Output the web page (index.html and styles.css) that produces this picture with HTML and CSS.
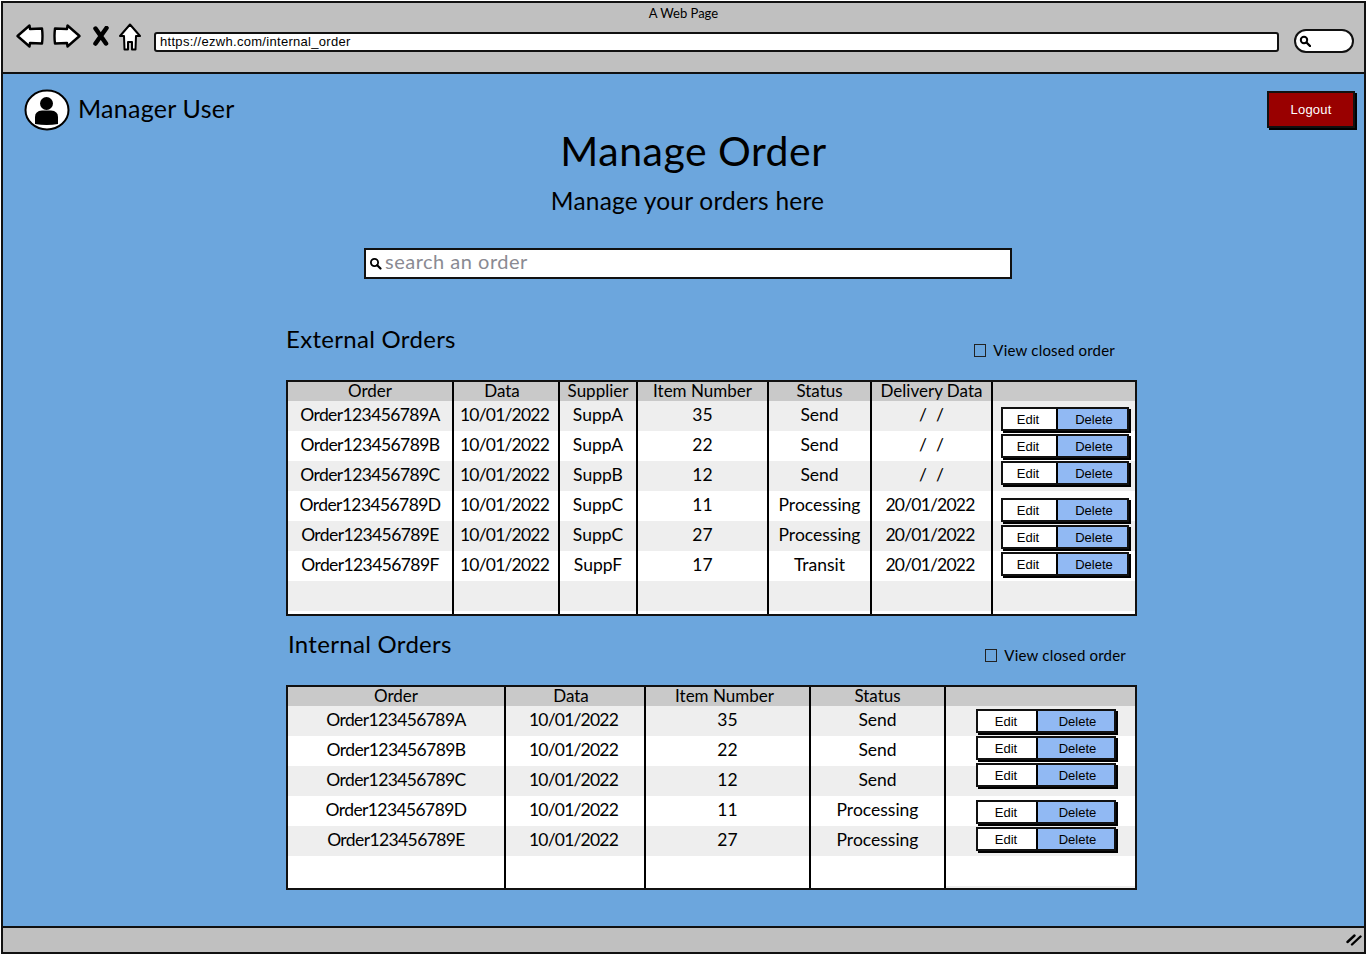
FILE: index.html
```html
<!DOCTYPE html>
<html>
  <head>
    <meta charset="utf-8">
    <title>A Web Page</title>
    <link rel="stylesheet" href="styles.css">
  </head>
  <body>
    <div class="window">
      <div class="toolbar">
        <div class="toolbar-title">A Web Page</div>
        <div class="toolbar-row">
          <svg class="icon-back" width="28" height="24" viewBox="0 0 28 24"><path d="M1.5 12 L13.5 1.5 L14 5 L26 4.5 Q27 12 26 19.5 L14 19 L13.5 22.5 Z" fill="#fff" stroke="#000" stroke-width="2.4" stroke-linejoin="round"/></svg>
          <svg class="icon-forward" width="28" height="24" viewBox="0 0 28 24"><path d="M26.5 12 L14.5 1.5 L14 5 L2 4.5 Q1 12 2 19.5 L14 19 L14.5 22.5 Z" fill="#fff" stroke="#000" stroke-width="2.4" stroke-linejoin="round"/></svg>
          <svg class="icon-stop" width="16" height="20" viewBox="0 0 16 20"><path d="M2.5 2.5 L13 17.5 M13.5 2 L2.5 17.5" fill="none" stroke="#000" stroke-width="4.5" stroke-linecap="round"/></svg>
          <svg class="icon-home" width="22" height="28" viewBox="0 0 22 28"><path d="M11 1.5 L21 13 L17 13 L16.5 26.5 L13 26.5 L13 19 L9 19 L9 26.5 L5.5 26.5 L5 13 L1 13 Z" fill="#fff" stroke="#000" stroke-width="2" stroke-linejoin="round"/></svg>
          <div class="url-bar">https://ezwh.com/internal_order</div>
          <div class="browser-search">
            <svg width="12" height="12" viewBox="0 0 12 12"><circle cx="5" cy="5" r="3.2" fill="none" stroke="#000" stroke-width="2"/><path d="M7.5 7.5 L11 11" stroke="#000" stroke-width="2.4" stroke-linecap="round"/></svg>
          </div>
        </div>
      </div>

      <div class="main">
        <div class="user-row">
          <div class="user">
            <svg class="avatar" width="46" height="42" viewBox="0 0 46 42">
              <ellipse cx="23" cy="21" rx="21.5" ry="19.5" fill="#fff" stroke="#000" stroke-width="2"/>
              <circle cx="22.5" cy="14.5" r="6.5" fill="#000"/>
              <path d="M11 35 L11 28 Q11 22 18 21.5 L27 21.5 Q34 22 34 28 L34 35 Q23 37 11 35 Z" fill="#000"/>
            </svg>
            <span class="user-name">Manager User</span>
          </div>
          <div class="logout">Logout</div>
        </div>

        <h1 class="page-title">Manage Order</h1>
        <h2 class="page-subtitle">Manage your orders here</h2>

        <div class="search">
          <svg width="13" height="13" viewBox="0 0 13 13"><circle cx="5.5" cy="5.5" r="3.6" fill="none" stroke="#000" stroke-width="1.8"/><path d="M8.2 8.2 L11.5 11.5" stroke="#000" stroke-width="2.2" stroke-linecap="round"/></svg>
          <span class="search-text">search an order</span>
        </div>

        <section class="orders orders-external">
          <div class="orders-head">
            <h3 class="orders-title">External Orders</h3>
            <div class="closed-toggle"><span class="checkbox"></span>View closed order</div>
          </div>
          <table>
            <colgroup>
              <col style="width:164px"><col style="width:106px"><col style="width:78px"><col style="width:131px"><col style="width:103px"><col style="width:121px"><col style="width:144px">
            </colgroup>
            <thead>
              <tr><th>Order</th><th>Data</th><th>Supplier</th><th>Item Number</th><th>Status</th><th>Delivery Data</th><th></th></tr>
            </thead>
            <tbody>
              <tr>
                <td class="cell-id">Order123456789A</td><td class="cell-date">10/01/2022</td><td>SuppA</td><td>35</td><td>Send</td><td>/ &nbsp;/</td>
                <td class="actions" rowspan="7">
                  <div class="btn-stack">
                    <div class="btn-group"><span class="btn-edit">Edit</span><span class="btn-delete">Delete</span></div>
                    <div class="btn-group"><span class="btn-edit">Edit</span><span class="btn-delete">Delete</span></div>
                    <div class="btn-group"><span class="btn-edit">Edit</span><span class="btn-delete">Delete</span></div>
                    <div class="btn-group"><span class="btn-edit">Edit</span><span class="btn-delete">Delete</span></div>
                    <div class="btn-group"><span class="btn-edit">Edit</span><span class="btn-delete">Delete</span></div>
                    <div class="btn-group"><span class="btn-edit">Edit</span><span class="btn-delete">Delete</span></div>
                  </div>
                </td>
              </tr>
              <tr><td class="cell-id">Order123456789B</td><td class="cell-date">10/01/2022</td><td>SuppA</td><td>22</td><td>Send</td><td>/ &nbsp;/</td></tr>
              <tr><td class="cell-id">Order123456789C</td><td class="cell-date">10/01/2022</td><td>SuppB</td><td>12</td><td>Send</td><td>/ &nbsp;/</td></tr>
              <tr><td class="cell-id">Order123456789D</td><td class="cell-date">10/01/2022</td><td>SuppC</td><td>11</td><td>Processing</td><td class="cell-date">20/01/2022</td></tr>
              <tr><td class="cell-id">Order123456789E</td><td class="cell-date">10/01/2022</td><td>SuppC</td><td>27</td><td>Processing</td><td class="cell-date">20/01/2022</td></tr>
              <tr><td class="cell-id">Order123456789F</td><td class="cell-date">10/01/2022</td><td>SuppF</td><td>17</td><td>Transit</td><td class="cell-date">20/01/2022</td></tr>
              <tr class="row-empty"><td></td><td></td><td></td><td></td><td></td><td></td></tr>
            </tbody>
          </table>
        </section>

        <section class="orders orders-internal">
          <div class="orders-head">
            <h3 class="orders-title">Internal Orders</h3>
            <div class="closed-toggle"><span class="checkbox"></span>View closed order</div>
          </div>
          <table>
            <colgroup>
              <col style="width:216px"><col style="width:140px"><col style="width:165px"><col style="width:135px"><col style="width:191px">
            </colgroup>
            <thead>
              <tr><th>Order</th><th>Data</th><th>Item Number</th><th>Status</th><th></th></tr>
            </thead>
            <tbody>
              <tr>
                <td class="cell-id">Order123456789A</td><td class="cell-date">10/01/2022</td><td>35</td><td>Send</td>
                <td class="actions" rowspan="6">
                  <div class="btn-stack">
                    <div class="btn-group"><span class="btn-edit">Edit</span><span class="btn-delete">Delete</span></div>
                    <div class="btn-group"><span class="btn-edit">Edit</span><span class="btn-delete">Delete</span></div>
                    <div class="btn-group"><span class="btn-edit">Edit</span><span class="btn-delete">Delete</span></div>
                    <div class="btn-group"><span class="btn-edit">Edit</span><span class="btn-delete">Delete</span></div>
                    <div class="btn-group"><span class="btn-edit">Edit</span><span class="btn-delete">Delete</span></div>
                  </div>
                </td>
              </tr>
              <tr><td class="cell-id">Order123456789B</td><td class="cell-date">10/01/2022</td><td>22</td><td>Send</td></tr>
              <tr><td class="cell-id">Order123456789C</td><td class="cell-date">10/01/2022</td><td>12</td><td>Send</td></tr>
              <tr><td class="cell-id">Order123456789D</td><td class="cell-date">10/01/2022</td><td>11</td><td>Processing</td></tr>
              <tr><td class="cell-id">Order123456789E</td><td class="cell-date">10/01/2022</td><td>27</td><td>Processing</td></tr>
              <tr class="row-empty"><td></td><td></td><td></td><td></td></tr>
            </tbody>
          </table>
        </section>
      </div>

      <div class="statusbar">
        <svg width="16" height="12" viewBox="0 0 16 12"><path d="M1.5 8 L8.5 1.5 M6 10.5 L14.5 2.5" stroke="#000" stroke-width="2.4" stroke-linecap="round"/></svg>
      </div>
    </div>
  </body>
</html>
```

FILE: styles.css
```css
* {
  box-sizing: border-box;
}

body {
  margin: 0;
  background-color: #fff;
  font-family: "Lato", "Liberation Sans", sans-serif;
  color: #000;
}

.window {
  display: flex;
  flex-direction: column;
  width: 1365px;
  height: 953px;
  margin: 1px 0 0 1px;
  border: 2px solid #111;
  background-color: #6ca6dd;
}

/* browser chrome */
.toolbar {
  height: 71px;
  padding-top: 3px;
  border-bottom: 2px solid #111;
  background-color: #c0c0c0;
}

.toolbar-title {
  height: 16px;
  font-size: 13px;
  line-height: 15px;
  text-align: center;
}

.toolbar-row {
  display: flex;
  align-items: flex-start;
  margin-top: 2px;
  padding-left: 13px;
}

.icon-forward {
  margin-left: 9px;
}

.icon-stop {
  margin: 2px 0 0 12px;
}

.icon-home {
  margin: -1px 0 0 10px;
}

.url-bar {
  width: 1125px;
  height: 20px;
  margin: 8px 0 0 13px;
  padding-left: 4px;
  border: 2px solid #111;
  border-radius: 3px;
  background-color: #fff;
  font-family: "Liberation Sans", sans-serif;
  font-size: 13px;
  line-height: 16px;
  letter-spacing: 0.3px;
}

.browser-search {
  display: flex;
  align-items: center;
  width: 60px;
  height: 24px;
  margin: 5px 0 0 15px;
  padding-left: 3px;
  border: 2px solid #111;
  border-radius: 12px;
  background-color: #fff;
}

/* page */
.main {
  flex: 1;
}

.user-row {
  display: flex;
  justify-content: space-between;
  padding: 16px 9px 0 21px;
}

.user {
  display: flex;
  align-items: center;
  height: 38px;
}

.avatar {
  margin: 2px 8px 0 0;
}

.user-name {
  margin-bottom: 2px;
  font-size: 25px;
  letter-spacing: 0.25px;
}

.logout {
  width: 88px;
  height: 37px;
  margin-top: 1px;
  border: 2px solid #111;
  box-shadow: 2px 2px 0 #000;
  background-color: #990000;
  color: #fff;
  font-family: "Liberation Sans", sans-serif;
  font-size: 13px;
  line-height: 33px;
  letter-spacing: 0.2px;
  text-align: center;
}

.page-title {
  margin: -1px 0 0;
  padding-left: 20px;
  font-size: 41px;
  font-weight: 400;
  line-height: 48px;
  letter-spacing: 0.5px;
  text-align: center;
}

.page-subtitle {
  margin: 11px 0 0;
  padding-left: 8px;
  font-size: 24.5px;
  font-weight: 400;
  line-height: 30px;
  letter-spacing: 0.2px;
  text-align: center;
}

.search {
  display: flex;
  align-items: center;
  width: 648px;
  height: 31px;
  margin: 32px 0 0 361px;
  padding-left: 3px;
  border: 2px solid #111;
  background-color: #fff;
}

.search-text {
  margin: 0 0 5px 3px;
  color: #8a8a92;
  font-size: 20px;
  letter-spacing: 0.5px;
}

/* order tables */
.orders {
  width: 851px;
  margin-left: 283px;
}

.orders-external {
  margin-top: 41px;
}

.orders-head {
  display: flex;
  justify-content: space-between;
  align-items: flex-start;
}

.orders-title {
  margin: 0;
  font-size: 24px;
  font-weight: 400;
  line-height: 38px;
  letter-spacing: 0.3px;
}

.closed-toggle {
  display: flex;
  align-items: center;
  margin-top: 20px;
  font-size: 15px;
  line-height: 20px;
  letter-spacing: 0.2px;
}

.checkbox {
  width: 12px;
  height: 13px;
  margin-right: 7px;
  border: 1.5px solid #222;
}

.orders-external .orders-head {
  height: 60px;
  padding-right: 22px;
}

.orders-internal .orders-head {
  height: 69px;
  padding: 9px 11px 0 2px;
}

table {
  width: 851px;
  border: 2px solid #111;
  border-spacing: 0;
  table-layout: fixed;
  background-color: #fff;
}

th {
  height: 19px;
  padding: 0 0 2px;
  border-left: 2px solid #000;
  background-color: #c9c9c9;
  font-size: 17px;
  font-weight: 400;
  line-height: 17px;
}

th:nth-child(2) {
  padding-right: 8px;
}

.orders-internal th:nth-child(3) {
  padding-right: 6px;
}

td {
  height: 30px;
  padding: 0 0 2px;
  border-left: 2px solid #000;
  font-size: 17.5px;
  line-height: 26px;
  text-align: center;
}

th:first-child,
td:first-child {
  border-left: 0;
}

.cell-id {
  letter-spacing: -0.6px;
}

.cell-date {
  padding-right: 3px;
  letter-spacing: -0.8px;
}

tbody tr:nth-child(odd) {
  background-color: #eee;
}

.orders-external .row-empty td {
  height: 33px;
  box-shadow: inset 0 -3px 0 #fff;
}

.orders-internal .row-empty td {
  height: 32px;
}

.actions {
  padding: 6px 0 0 8px;
  vertical-align: top;
  background: repeating-linear-gradient(#eee 0 30px, #fff 30px 60px);
}

.orders-internal .actions {
  padding: 3px 0 0 30px;
}

.btn-stack {
  display: flex;
  flex-direction: column;
  gap: 3px;
}

.btn-group {
  display: flex;
  width: 128px;
  height: 24px;
  border: 2px solid #111;
  box-shadow: 2px 2px 0 #000;
  font-family: "Liberation Sans", sans-serif;
  font-size: 13px;
  line-height: 22px;
}

.btn-group:nth-child(4) {
  margin-top: 10px;
}

.orders-internal .btn-group {
  width: 140px;
}

.btn-edit {
  width: 53px;
  padding-right: 3px;
  background-color: #fff;
}

.orders-internal .btn-edit {
  width: 58px;
  padding-right: 2px;
}

.btn-delete {
  flex: 1;
  padding-left: 3px;
  border-left: 2px solid #000;
  background-color: #91b9f3;
}

.statusbar {
  display: flex;
  justify-content: flex-end;
  align-items: center;
  height: 26px;
  padding-right: 2px;
  border-top: 2px solid #111;
  background-color: #c0c0c0;
}
```
